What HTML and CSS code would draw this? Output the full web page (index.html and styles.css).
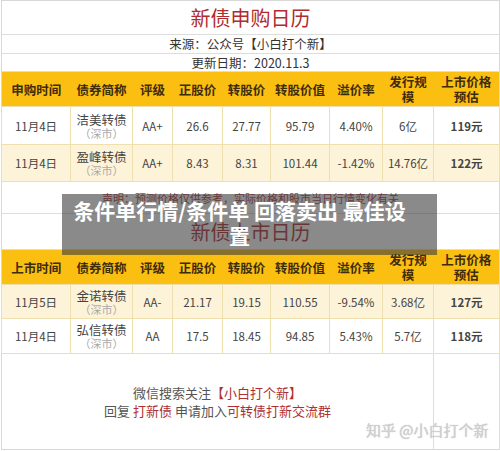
FILE: index.html
```html
<!DOCTYPE html>
<html lang="zh-CN">

<head>
    <meta charset="UTF-8">
    <meta name="viewport" content="width=device-width, initial-scale=1.0">
    <title>新债申购日历</title>

    <link rel="stylesheet" href="styles.css">
</head>

<body>
    <div id="sheet">
        <table class="grid">
            <colgroup>
                <col style="width: 69px">
                <col style="width: 62px">
                <col style="width: 40px">
                <col style="width: 50px">
                <col style="width: 48px">
                <col style="width: 59px">
                <col style="width: 53px">
                <col style="width: 51px">
                <col style="width: 66px">
            </colgroup>

            <!-- 申购日历 -->
            <tr class="title first"><td colspan="9">新债申购日历</td></tr>
            <tr class="meta"><td colspan="9">来源：公众号【小白打个新】</td></tr>
            <tr class="meta date"><td colspan="9">更新日期：2020.11.3</td></tr>
            <tr class="head">
                <th>申购时间</th>
                <th>债券简称</th>
                <th>评级</th>
                <th>正股价</th>
                <th>转股价</th>
                <th>转股价值</th>
                <th>溢价率</th>
                <th>发行规<br>模</th>
                <th>上市价格<br>预估</th>
            </tr>
            <tr class="row">
                <td>11月4日</td>
                <td><span class="bond">洁美转债</span><span class="mkt">（深市）</span></td>
                <td>AA+</td>
                <td>26.6</td>
                <td>27.77</td>
                <td>95.79</td>
                <td>4.40%</td>
                <td>6亿</td>
                <td class="price">119元</td>
            </tr>
            <tr class="row alt">
                <td>11月4日</td>
                <td><span class="bond">盈峰转债</span><span class="mkt">（深市）</span></td>
                <td>AA+</td>
                <td>8.43</td>
                <td>8.31</td>
                <td>101.44</td>
                <td>-1.42%</td>
                <td>14.76亿</td>
                <td class="price">122元</td>
            </tr>
            <tr class="note"><td colspan="9">声明：预测价格仅供参考，实际价格和股市当日行情变化有关</td></tr>

            <!-- 上市日历 -->
            <tr class="title"><td colspan="9">新债上市日历</td></tr>
            <tr class="head">
                <th>上市时间</th>
                <th>债券简称</th>
                <th>评级</th>
                <th>正股价</th>
                <th>转股价</th>
                <th>转股价值</th>
                <th>溢价率</th>
                <th>发行规<br>模</th>
                <th>上市价格<br>预估</th>
            </tr>
            <tr class="row alt listed">
                <td>11月5日</td>
                <td><span class="bond">金诺转债</span><span class="mkt">（深市）</span></td>
                <td>AA-</td>
                <td>21.17</td>
                <td>19.15</td>
                <td>110.55</td>
                <td>-9.54%</td>
                <td>3.68亿</td>
                <td class="price">127元</td>
            </tr>
            <tr class="row listed last">
                <td>11月4日</td>
                <td><span class="bond">弘信转债</span><span class="mkt">（深市）</span></td>
                <td>AA</td>
                <td>17.5</td>
                <td>18.45</td>
                <td>94.85</td>
                <td>5.43%</td>
                <td>5.7亿</td>
                <td class="price">118元</td>
            </tr>
            <tr class="foot">
                <td colspan="8">
                    <p>微信搜索关注<span class="red">【小白打个新】</span></p>
                    <p>回复 <span class="red">打新债</span> 申请加入<span class="red">可转债打新交流群</span></p>
                </td>
                <td></td>
            </tr>
        </table>

        <div class="overlay">条件单行情/条件单 回落卖出 最佳设置</div>
        <div class="mark">知乎 @小白打个新</div>
    </div>
</body>

</html>
```

FILE: styles.css
```css
body {
  margin: 0;
  background: #ffffff;
  font-family: "Noto Sans CJK SC", "Noto Sans", sans-serif;
  color: #333333;
}
#sheet {
  position: relative;
  width: 500px;
  height: 451px;
  overflow: hidden;
}
.grid {
  width: 499px;
  margin: 0 0 0 1px;
  border-collapse: collapse;
  table-layout: fixed;
  border: 1px solid #d8d8d8;
}
.grid td,
.grid th {
  padding: 0;
  text-align: center;
  vertical-align: middle;
  white-space: nowrap;
}
/* top title rows */
.title td {
  height: 35px;
  font-size: 20px;
  color: #b02c2e;
  border-bottom: 1px solid #dddddd;
}
.title.first td {
  height: 33px;
}
.meta td {
  height: 18px;
  font-size: 12.5px;
  line-height: 14px;
  color: #333333;
  border-bottom: 1px solid #dddddd;
}
.meta.date td {
  height: 17px;
}
/* yellow header */
.head th {
  height: 34px;
  background: #fbbf12;
  color: #3e2c0a;
  font-size: 12.5px;
  font-weight: bold;
  line-height: 15px;
}
/* body rows */
.row td {
  height: 37px;
  font-size: 11.5px;
  color: #444444;
  border: 1px solid #eedfae;
}
.row.alt td {
  height: 36px;
  background: #fdf3d9;
}
.row.listed td {
  height: 33px;
}
.row.listed.last td {
  height: 34px;
}
.bond {
  display: block;
  font-size: 12.5px;
  line-height: 15px;
}
.mkt {
  display: block;
  font-size: 11px;
  line-height: 13px;
  color: #aaaaaa;
}
.price {
  color: #b0282c;
  font-weight: bold;
}
.note td {
  height: 31px;
  font-size: 11px;
  color: #b03a3a;
  border-bottom: 1px solid #dddddd;
}
/* footer */
.foot td {
  height: 95px;
  border-right: 1px solid #dddddd;
  font-size: 13px;
  color: #555555;
}
.foot p {
  margin: 0;
  line-height: 18px;
}
.red {
  color: #b03030;
}
/* picture caption lying over the sheet */
.overlay {
  position: absolute;
  left: 62px;
  top: 194px;
  width: 375px;
  height: 61px;
  box-sizing: border-box;
  padding: 4px 28px 0 8px;
  background: rgba(60, 60, 60, 0.6);
  color: #ffffff;
  font-size: 21px;
  font-weight: bold;
  line-height: 25px;
  text-align: center;
}
.mark {
  position: absolute;
  left: 366px;
  top: 419px;
  font-size: 15px;
  color: #d0d0d0;
  text-shadow: 0 0 1px rgba(120, 120, 120, 0.5);
}
```
